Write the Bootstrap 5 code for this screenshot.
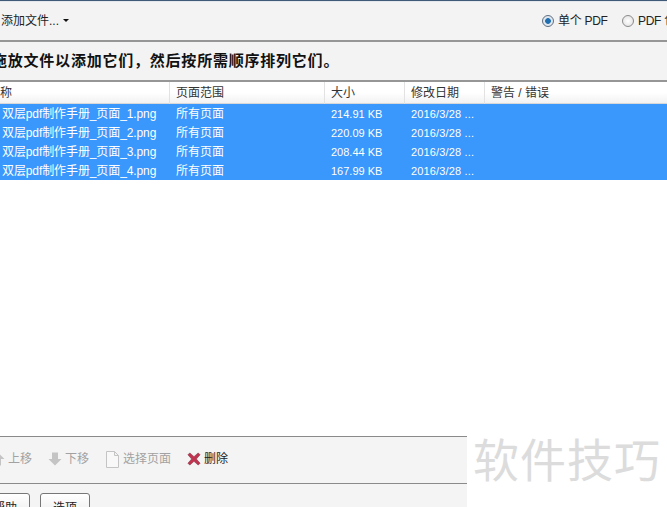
<!DOCTYPE html>
<html lang="zh"><head><meta charset="utf-8">
<link href="https://cdn.jsdelivr.net/npm/bootstrap@5.3.0/dist/css/bootstrap.min.css" rel="stylesheet">
<style>
html,body{height:507px;overflow:hidden;background:#fff}
body{font:12px/16px "Liberation Sans","Noto Sans CJK SC",sans-serif;color:#222;position:relative}
.app{width:667px;height:507px;overflow:hidden}
.topbar{height:42px;background:#f3f3f3;border-top:1px solid #3f5a78;border-bottom:2px solid #969696;box-shadow:inset 0 1px 0 #e4e8ec}
.addbtn{margin-left:1px}
.caret-mini{width:0;height:0;border:3px solid transparent;border-top:3px solid #111;border-bottom:0;margin-left:4px}
.radio-o{width:12px;height:12px;flex:none;border-radius:50%;border:1px solid #8b8b8b;background:radial-gradient(#fff,#ddd);margin-right:4px;display:inline-block}
.radio-o.on{background:radial-gradient(#1f6fb0 0 2.5px,#dfe6ee 3.2px);border-color:#5f6f80}
.opt1{margin-right:16px;width:64px;white-space:nowrap;letter-spacing:-.3px}
.opt2{white-space:nowrap;width:45px;overflow:hidden;letter-spacing:-.3px}
.hint{height:38px;background:#f3f3f3;font-size:15px;font-weight:700;color:#111;padding-top:11px;text-indent:-8px;white-space:nowrap;letter-spacing:.78px}
.head{height:24px;border-top:2px solid #969696;background:linear-gradient(#fff 50%,#f2f2f2);border-bottom:1px solid #d8d8d8;align-items:center;color:#333}
.c1{width:170px;flex:none}
.c2{width:155px;flex:none}
.c3{width:80px;flex:none}
.c4{width:80px;flex:none}
.cell{padding-left:6px;white-space:nowrap}
.head .cell{height:22px;line-height:23px;border-right:1px solid #e2e2e2}
.head .c1{text-indent:-18px;padding-left:6px;overflow:hidden}
.list{background:#3a97fb;color:#fff}
.line{height:19px;line-height:21px}
.rows .c1.cell{padding-left:2px;letter-spacing:-.1px}
.rows .c3,.rows .c4{font-size:11px}
.rows .c4{letter-spacing:.15px}
.blank{height:256px}
.lower{width:467px;background:#f4f4f4}
.tools{height:48px;border-top:1px solid #8a8a8a;border-bottom:1px solid #8a8a8a;color:#a2a2a2;margin-left:-9px;padding-bottom:2px}
.tools .tool{margin-right:16px}
.tools .del{color:#222}
.tools svg{display:block;margin-right:3px}
.foot{height:23px;padding-top:9px;margin-left:-20px}
.fbtn{width:50px;height:30px;border:1px solid #777;border-radius:3px;background:linear-gradient(#fff,#e8e8e8);color:#222;padding:0;line-height:16px;font-size:12px;margin-right:10px;vertical-align:top}
.wm{position:absolute;left:473px;top:429px;font:46px/56px "Noto Sans CJK SC",sans-serif;color:#dcdcdc;letter-spacing:1px}
</style></head><body>
<div class="app">
  <div class="topbar d-flex align-items-center justify-content-between">
    <div class="addbtn d-flex align-items-center">添加文件...<span class="caret-mini"></span></div>
    <div class="d-flex align-items-center">
      <div class="opt1 d-flex align-items-center"><span class="radio-o on"></span>单个 PDF</div>
      <div class="opt2 d-flex align-items-center"><span class="radio-o"></span>PDF 包</div>
    </div>
  </div>
  <div class="hint">拖放文件以添加它们，然后按所需顺序排列它们。</div>
  <div class="head d-flex">
    <div class="cell c1">名称</div><div class="cell c2">页面范围</div><div class="cell c3">大小</div><div class="cell c4">修改日期</div><div class="cell flex-grow-1 border-0">警告 / 错误</div>
  </div>
  <div class="list rows">
    <div class="line d-flex"><div class="cell c1">双层pdf制作手册_页面_1.png</div><div class="cell c2">所有页面</div><div class="cell c3">214.91 KB</div><div class="cell c4">2016/3/28 ...</div></div>
    <div class="line d-flex"><div class="cell c1">双层pdf制作手册_页面_2.png</div><div class="cell c2">所有页面</div><div class="cell c3">220.09 KB</div><div class="cell c4">2016/3/28 ...</div></div>
    <div class="line d-flex"><div class="cell c1">双层pdf制作手册_页面_3.png</div><div class="cell c2">所有页面</div><div class="cell c3">208.44 KB</div><div class="cell c4">2016/3/28 ...</div></div>
    <div class="line d-flex"><div class="cell c1">双层pdf制作手册_页面_4.png</div><div class="cell c2">所有页面</div><div class="cell c3">167.99 KB</div><div class="cell c4">2016/3/28 ...</div></div>
  </div>
  <div class="blank"></div>
  <div class="lower">
    <div class="tools d-flex align-items-center">
      <div class="tool d-flex align-items-center"><svg width="14" height="14" viewBox="0 0 14 14"><path d="M7 .5 13.500 7H10v6.500H4V7H.5z" fill="#c4c4c4"/></svg>上移</div>
      <div class="tool d-flex align-items-center"><svg width="14" height="14" viewBox="0 0 14 14"><path d="M7 13.500 13.500 7H10V.5H4V7H.5z" fill="#c4c4c4"/></svg>下移</div>
      <div class="tool d-flex align-items-center"><svg width="15" height="17" viewBox="0 0 15 17"><path d="M1.500.5h8l4 4v12h-12z M9.500.5v4h4" fill="#f8f8f8" stroke="#c4c4c4"/></svg>选择页面</div>
      <div class="tool del d-flex align-items-center"><svg width="14" height="14" viewBox="0 0 15 14"><path d="M1 2.500 3 .5l4.500 4L12 .5l2 2L10 7l4 4.500-2 2L7.500 9.500 3 13.500l-2-2L5 7z" fill="#c2334f" stroke="#7d2c40" stroke-width=".6"/></svg>删除</div>
    </div>
    <div class="foot"><button class="fbtn">帮助</button><button class="fbtn">选项</button></div>
  </div>
</div>
<div class="wm">软件技巧</div>
</body></html>
